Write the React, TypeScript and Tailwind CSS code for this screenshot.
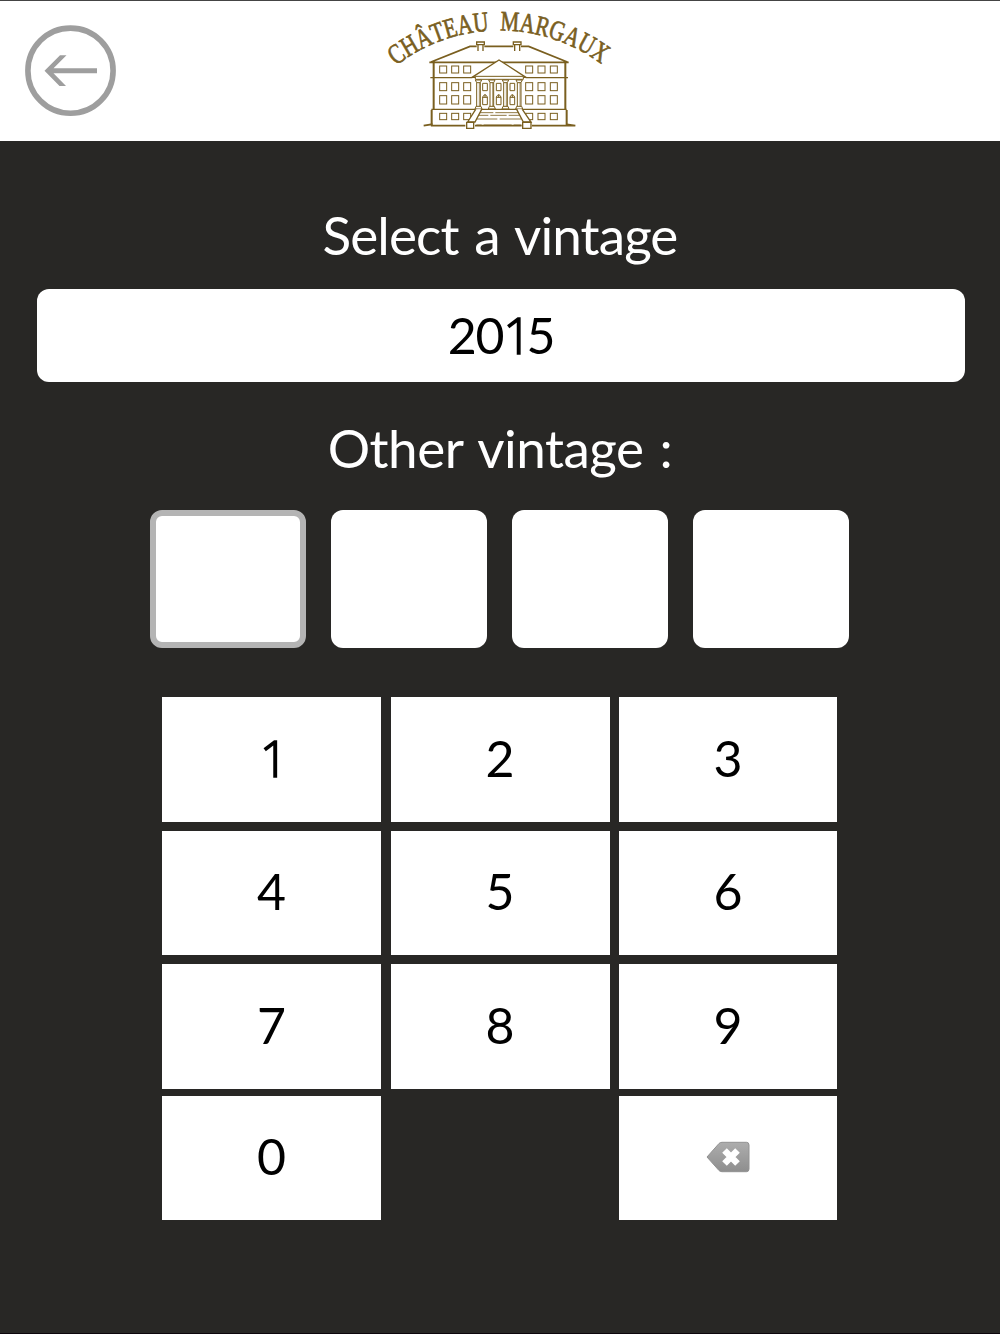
import { useState } from 'react';

const WINDOW_ROWS = [
  { y: 198, h: 21 },
  { y: 248, h: 24 },
  { y: 287, h: 25 },
  { y: 340, h: 19 },
];
const WINDOW_COLUMNS = [179, 215, 251, 437, 474, 511];

function ChateauLogo() {
  return (
    <svg
      viewBox="0 3 720 420"
      className="h-[140px] w-[240px] overflow-visible"
      fill="none"
      stroke="#7a5f1f"
      strokeWidth="4"
    >
      <path id="logo-arc" d="M 45 199 A 513 513 0 0 1 710 230" stroke="none" />
      <g fontFamily="'Liberation Serif', serif" fontSize="84" fill="#7a5f1f" strokeWidth="2.2">
        <text textLength="304" lengthAdjust="spacingAndGlyphs">
          <textPath href="#logo-arc" startOffset="3">
            CHÂTEAU
          </textPath>
        </text>
        <text textLength="326" lengthAdjust="spacingAndGlyphs">
          <textPath href="#logo-arc" startOffset="339">
            MARGAUX
          </textPath>
        </text>
      </g>
      {/* roof */}
      <path d="M148 187H566M153 186L270 139H290M313 139H400M423 139H446L562 186" strokeWidth="5.5" />
      <path d="M290 126H313V134H290ZM294 134V153M309 134V153M400 126H423V134H400ZM404 134V153M419 134V153" />
      {/* walls */}
      <path d="M161 188V328M556 188V328M155 330V376M560 330V376" strokeWidth="6" />
      <path d="M151 233H277M437 233H564M154 328H292M424 328H560" />
      <path d="M131 377L155 373V377H256M285 377H425M456 377H586L560 373" strokeWidth="5" />
      {WINDOW_ROWS.map((row) =>
        WINDOW_COLUMNS.map((x) => (
          <rect key={`${x}-${row.y}`} x={x} y={row.y} width="21" height={row.h} strokeWidth="3" />
        ))
      )}
      {/* pediment */}
      <path d="M276 232L357 180L438 232Z" fill="#fff" />
      <path d="M286 229H430V238H286Z" fill="#fff" strokeWidth="3" />
      {/* columns */}
      {[288, 328, 369, 410].map((x) => (
        <g key={x} strokeWidth="3">
          <path d={`M${x - 2} 240h19l-4 8h-11zM${x + 2} 248V319M${x + 13} 248V319`} />
          <path d={`M${x + 10} 248V319`} strokeWidth="2" />
          <path d={`M${x} 319h15l3 8h-21z`} />
        </g>
      ))}
      {[308, 349, 390].map((x) => (
        <g key={x} strokeWidth="3">
          <path d={`M${x} 250h14v22h-14zM${x} 314V291q7 -14 14 0V314zM${x} 292h14M${x + 7} 284v8`} />
        </g>
      ))}
      {/* staircase */}
      <path d="M287 328L263 366H285L305 328M427 328L453 366H430L410 328" fill="#fff" />
      <path d="M303 328H412" />
      <path
        d="M300 338H340M346 338H415M297 346H325M331 346H380M386 346H418M290 357H352M359 357H423M289 375H305M311 375H395M401 375H424"
        strokeWidth="2.5"
      />
      <path d="M260 367H281V385H260ZM428 367H453V385H428Z" fill="#fff" />
    </svg>
  );
}

function BackIcon() {
  return (
    <svg viewBox="0 0 92 92" className="size-[92px]" fill="none">
      <circle cx="45.5" cy="45.7" r="42.6" stroke="#9e9e9e" strokeWidth="5.6" />
      <path d="M19.5 45.7L35 30.2H41.5L28.5 43.2H72V48.2H28.5L41 61H34.5Z" fill="#9e9e9e" />
    </svg>
  );
}

function DeleteIcon() {
  return (
    <svg viewBox="0 0 44 32" className="h-8 w-11">
      <defs>
        <linearGradient id="delete-fill" x1="0" y1="0" x2="0" y2="1">
          <stop offset="0" stopColor="#adadad" />
          <stop offset="1" stopColor="#8e8e8e" />
        </linearGradient>
      </defs>
      <path
        d="M1 16L13 2.5Q14.3 1.3 16 1.3H40.5Q43 1.3 43 4V28Q43 30.7 40.5 30.7H16Q14.3 30.7 13 29.5Z"
        fill="url(#delete-fill)"
        stroke="#929292"
        strokeWidth="1"
      />
      <path d="M18.5 9.5L31.5 22.5M31.5 9.5L18.5 22.5" stroke="#fff" strokeWidth="6.5" />
    </svg>
  );
}

// Lato draws the 1 with a foot, so that digit is set in Open Sans
function Digits({ value }: { value: string }) {
  return (
    <span className="flex items-baseline">
      {value.split('').map((digit, i) => (
        <span
          key={i}
          className={
            digit === '1'
              ? "w-[23px] -indent-px font-['Open_Sans',sans-serif] leading-none font-light tracking-[-6px] [-webkit-text-stroke:1.5px_black]"
              : ''
          }
        >
          {digit}
        </span>
      ))}
    </span>
  );
}

interface KeyProps {
  label: string;
  onPress: () => void;
}

function Key({ label, onPress }: KeyProps) {
  return (
    <button
      onClick={onPress}
      className="flex h-full w-full items-center justify-center bg-white pb-1 text-[50px] leading-none text-black"
    >
      {label === 'delete' ? (
        <span className="pt-0.5">
          <DeleteIcon />
        </span>
      ) : (
        <Digits value={label} />
      )}
    </button>
  );
}

const KEYS = ['1', '2', '3', '4', '5', '6', '7', '8', '9', '0', '', 'delete'];

export default function App() {
  const [digits, setDigits] = useState('');

  const handleKey = (key: string) => {
    if (key === 'delete') {
      setDigits(digits.slice(0, -1));
    } else if (digits.length < 4) {
      setDigits(digits + key);
    }
  };

  return (
    <div className="flex h-[1334px] w-[1000px] flex-col overflow-hidden border-b border-[#0c060c] bg-[#282725] font-['Lato',sans-serif]">
      <header className="flex h-[141px] shrink-0 border-t border-[#444444] bg-white">
        <div className="w-[380px] pt-6 pl-[25px]">
          <button aria-label="Back" className="block">
            <BackIcon />
          </button>
        </div>
        <ChateauLogo />
      </header>

      <main className="flex flex-col items-center">
        <h1 className="mt-[62px] h-[86px] text-[53px] leading-[64px] tracking-[-0.9px] text-white [word-spacing:3px]">
          Select a vintage
        </h1>
        <button className="ml-0.5 flex h-[93px] w-[928px] items-center justify-center rounded-xl bg-white pb-0.5 text-[50px] leading-none tracking-[-1.2px] text-black">
          <Digits value="2015" />
        </button>
        <h2 className="mt-[34px] h-[94px] text-[53px] leading-[64px] tracking-[-0.5px] text-white [word-spacing:3px]">
          Other vintage :
        </h2>

        <div className="mr-px flex gap-[25px]">
          {[0, 1, 2, 3].map((i) => (
            <div
              key={i}
              className={`flex h-[138px] w-[156px] items-center justify-center rounded-xl bg-white text-[50px] text-black ${
                i === digits.length ? 'border-[6px] border-[#b4b4b4]' : ''
              }`}
            >
              <Digits value={digits[i] ?? ''} />
            </div>
          ))}
        </div>

        <div className="mt-[49px] mr-px grid w-[675px] grid-cols-[219px_219px_218px] grid-rows-[125px_124px_125px_124px] justify-between gap-y-[9px]">
          {KEYS.map((key, i) => (
            <div key={i} className={i > 8 ? '-mt-0.5 mb-0.5' : ''}>
              {key && <Key label={key} onPress={() => handleKey(key)} />}
            </div>
          ))}
        </div>
      </main>
    </div>
  );
}
